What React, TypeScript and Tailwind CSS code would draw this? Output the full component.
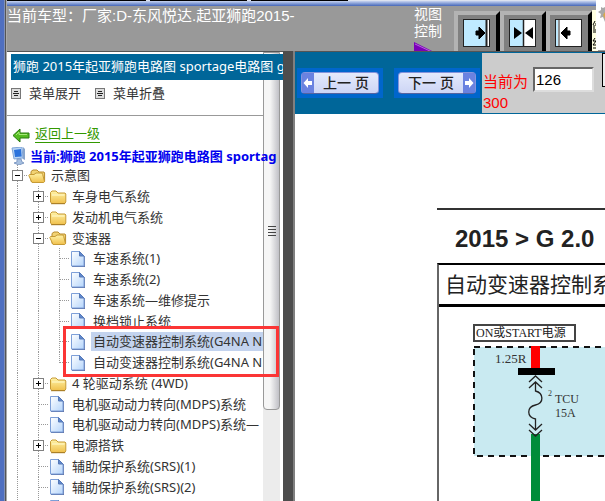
import type { ReactNode } from "react";

const UI = "font-['Noto_Sans','Noto_Sans_CJK_SC',sans-serif]";
const ARIAL = "font-['Liberation_Sans','Noto_Sans_CJK_SC',sans-serif]";
const SERIF = "font-['Liberation_Serif','Noto_Sans_CJK_SC',serif]";

type Cell = "line" | "tee" | "end" | "plus" | "minus" | "root";
type Row = { cells: Cell[]; icon: "open" | "closed" | "page"; text: string; selected?: boolean };

const rows: Row[] = [
  { cells: ["root"], icon: "open", text: "示意图" },
  { cells: ["line", "plus"], icon: "closed", text: "车身电气系统" },
  { cells: ["line", "plus"], icon: "closed", text: "发动机电气系统" },
  { cells: ["line", "minus"], icon: "open", text: "变速器" },
  { cells: ["line", "line", "tee"], icon: "page", text: "车速系统(1)" },
  { cells: ["line", "line", "tee"], icon: "page", text: "车速系统(2)" },
  { cells: ["line", "line", "tee"], icon: "page", text: "车速系统—维修提示" },
  { cells: ["line", "line", "tee"], icon: "page", text: "换档锁止系统" },
  { cells: ["line", "line", "tee"], icon: "page", text: "自动变速器控制系统(G4NA N", selected: true },
  { cells: ["line", "line", "end"], icon: "page", text: "自动变速器控制系统(G4NA N" },
  { cells: ["line", "plus"], icon: "closed", text: "4 轮驱动系统 (4WD)" },
  { cells: ["line", "tee"], icon: "page", text: "电机驱动动力转向(MDPS)系统" },
  { cells: ["line", "tee"], icon: "page", text: "电机驱动动力转向(MDPS)系统—" },
  { cells: ["line", "plus"], icon: "closed", text: "电源搭铁" },
  { cells: ["line", "tee"], icon: "page", text: "辅助保护系统(SRS)(1)" },
  { cells: ["line", "tee"], icon: "page", text: "辅助保护系统(SRS)(2)" },
  { cells: ["line", "tee"], icon: "page", text: "" },
];

function Guide({ kind }: { kind: Cell }) {
  const box = kind === "plus" || kind === "minus" || kind === "root";
  const drawing = (
    <svg width="21" height="21" viewBox="0 0 21 21" className="block" aria-hidden="true">
      <path
        d={kind === "end" ? "M10.5 0V11" : "M10.5 0V21"}
        stroke="#999"
        strokeDasharray="1 1"
        fill="none"
      />
      {kind !== "line" && <path d="M11 10.5H21" stroke="#999" strokeDasharray="1 1" fill="none" />}
      {box && <rect x="5.5" y="5.5" width="10" height="10" fill="#fff" stroke="#808080" />}
      {box && <path d="M8 10.5h5" stroke="#000" />}
      {kind === "plus" && <path d="M10.5 8v5" stroke="#000" />}
    </svg>
  );
  return box ? (
    <button type="button" aria-label="展开或折叠" className="shrink-0">
      {drawing}
    </button>
  ) : (
    <span className="shrink-0">{drawing}</span>
  );
}

function TreeIcon({ icon }: { icon: Row["icon"] }) {
  return (
    <svg width="18" height="18" viewBox="0 0 18 18" className="shrink-0" aria-hidden="true">
      <defs>
        <linearGradient id="fold" x1="0" y1="0" x2="0" y2="1">
          <stop offset="0" stopColor="#fff3a8" />
          <stop offset="1" stopColor="#f0c04c" />
        </linearGradient>
        <linearGradient id="page" x1="0" y1="0" x2="1" y2="1">
          <stop offset="0" stopColor="#ffffff" />
          <stop offset="1" stopColor="#b5d5fb" />
        </linearGradient>
      </defs>
      {icon === "closed" && (
        <>
          <path d="M1.5 14V4.5L3 3h4l2 2h7l.8 1V14l-1 1.5H3z" fill="url(#fold)" stroke="#c69a35" />
          <path d="M2 15.7h14" stroke="#a67a24" />
          <path d="M3 7h12.500" stroke="#fffbd0" />
        </>
      )}
      {icon === "open" && (
        <>
          <path d="M3 14.500V4.500L5 3h4l2 2h5l.6 1v8.500z" fill="#f2d374" stroke="#b88c2c" />
          <path d="M.8 8.500l.7-1H6l2-1.500h6l.7 1.500 1.800 7-.8 1H4z" fill="url(#fold)" stroke="#c69a35" />
        </>
      )}
      {icon === "page" && (
        <>
          <path d="M2 16.300h12.300V6" stroke="#5468a0" strokeWidth="1.200" fill="none" />
          <path d="M1.500 1.500h8l4.500 4.500v10H1.500z" fill="url(#page)" stroke="#7d9fd8" />
          <path d="M9.500 1.500v4.500h4.500z" fill="#6088cc" stroke="#5478b8" />
        </>
      )}
    </svg>
  );
}

function ListIcon() {
  return (
    <svg width="10" height="11" viewBox="0 0 10 11" aria-hidden="true">
      <rect x=".5" y=".5" width="9" height="10" fill="#ddd" stroke="#777" />
      <path d="M3 3.500h4M2 5.500h6M3 7.500h4" stroke="#222" />
    </svg>
  );
}

function ViewButton({ label, children }: { label: string; children: ReactNode }) {
  return (
    <button type="button" aria-label={label} className="shrink-0">
      <svg width="46" height="40" viewBox="0 0 46 40" className="block">
        <path d="M0 0h46v40H0z" fill="#b3b3b3" />
        <path d="M4 4h38v36H4z" fill="#808080" />
        <path d="M42 4l4-4v40h-4z" fill="#000" />
        <rect x="9.500" y="8.500" width="26" height="27" fill="#fff" stroke="#222" />
        {children}
      </svg>
    </button>
  );
}

function PageButton({ next, children }: { next?: boolean; children: ReactNode }) {
  const arrow = (
    <span className="flex w-3 shrink-0 items-center justify-center bg-[#6a82e0]">
      <svg width="10" height="12" viewBox="0 0 10 12" aria-hidden="true">
        <path d={next ? "M9.500 6L5 1v3H1v4h4v3z" : "M.5 6L5 1v3h4v4H5v3z"} fill="#fff" />
      </svg>
    </span>
  );
  return (
    <button type="button" className="flex w-[86px] shrink-0 bg-[#0066cc] p-1">
      <span className="flex h-[22px] flex-1 rounded-sm border border-[#8494dc] border-b-[#5563a0] bg-linear-to-b from-[#e4eafc] to-[#cdd5f5]">
        {!next && arrow}
        <span className="flex-1 whitespace-nowrap text-center text-[14px] leading-5 font-medium text-[#222]">
          {children}
        </span>
        {next && arrow}
      </span>
    </button>
  );
}

function Sidebar() {
  return (
    <aside className={`flex w-[276px] shrink-0 overflow-hidden border-t border-[#555] bg-white text-[13px] text-[#333] ${UI}`}>
      <div className="relative z-10 w-64 shrink-0">
        <h1 className="mt-[2px] ml-1 h-[26px] w-[272px] overflow-hidden whitespace-nowrap bg-[#006699] pl-[2px] leading-6 text-white">
          狮跑 2015年起亚狮跑电路图 sportage电路图 g
        </h1>
        <div className="flex h-9 items-center gap-[14px] border-b border-[#999] pb-2 pl-1">
          <button type="button" className="flex items-center gap-2">
            <ListIcon />
            菜单展开
          </button>
          <button type="button" className="flex items-center gap-2">
            <ListIcon />
            菜单折叠
          </button>
        </div>
        <div className="flex h-[27px] items-end gap-1 pl-[5px]">
          <svg width="19" height="15" viewBox="0 0 19 15" aria-hidden="true">
            <path d="M1 7.500L8 1v4h9v5H8v4z" fill="#55bb22" stroke="#287a10" />
            <path d="M4 7l3-3v2.500h8" stroke="#a5e878" fill="none" />
          </svg>
          <a href="#back" className="border-b border-[#339900] leading-[17px] text-[#339900]">
            返回上一级
          </a>
        </div>
        <div className="flex h-[22px] w-[276px] items-center gap-1 overflow-hidden whitespace-nowrap pt-1 pl-1 leading-[18px] font-bold text-[#0000ee]">
          <svg width="15" height="18" viewBox="0 0 15 18" className="shrink-0" aria-hidden="true">
            <path d="M1 1l10-1 1 11-9 1z" fill="#b7d4f4" stroke="#7fa4d8" />
            <path d="M3 3l7-1 .7 7.500L4 10z" fill="#2a72dc" />
            <path d="M12 0l2 2v11l-2-1z" fill="#88a5cc" />
            <path d="M6 12h4l1 3 2 1-5 2-5-2 3-1z" fill="#a6bfdf" stroke="#819cc5" />
          </svg>
          当前:狮跑 2015年起亚狮跑电路图 sportag
        </div>
        <div className="relative">
          <ul>
            {rows.map((row, i) => (
              <li key={i} className="flex h-[21px] items-center overflow-hidden nth-[4n]:h-5">
                {row.cells.map((cell, j) => (
                  <Guide key={j} kind={cell} />
                ))}
                <TreeIcon icon={row.icon} />
                {row.text && (
                  <a
                    href="#item"
                    className={`ml-[3px] flex-1 overflow-hidden whitespace-nowrap pl-[2px] leading-[19px] ${row.selected ? "bg-[#c3d3ee]" : ""}`}
                  >
                    {row.text}
                  </a>
                )}
              </li>
            ))}
          </ul>
          <div className="pointer-events-none absolute top-[161px] left-14 h-[51px] w-[216px] border-3 border-[#fb3535]" />
        </div>
      </div>
      <div className="w-[17px] shrink-0 bg-[#ececec]">
        <div className="flex h-[358px] items-center justify-center rounded-b-sm border border-[#999] bg-linear-to-r from-[#f6f6f6] from-40% to-[#c0c0c6]">
          <svg width="8" height="10" viewBox="0 0 8 10" aria-hidden="true">
            <path d="M0 .5h8M0 3.500h8M0 6.500h8M0 9.500h8" stroke="#444" />
          </svg>
        </div>
      </div>
    </aside>
  );
}

function Header() {
  return (
    <header className={`flex h-[45px] shrink-0 items-start overflow-hidden bg-[#999] text-white ${ARIAL}`}>
      <p className="w-[407px] shrink-0 whitespace-nowrap text-[15px] leading-[19px]">
        当前车型：厂家:D-东风悦达.起亚狮跑2015-
      </p>
      <div className="w-10 shrink-0">
        <p className="w-8 pb-[2px] text-[14px] leading-[17px]">视图控制</p>
        <svg width="22" height="11" viewBox="0 0 22 11" className="block" aria-hidden="true">
          <path d="M0 0l22 11H0z" fill="#7a00b8" />
          <path d="M1 2l17 8" stroke="#b760e0" />
        </svg>
      </div>
      <div className="flex min-w-0 flex-1 pt-1">
        <ViewButton label="展开左侧">
          <path d="M10 9h22v26H10z" fill="#bfeaff" />
          <path d="M32.500 9v26" stroke="#222" strokeWidth="2" />
          <path d="M22 20h3v-4l6 6-6 6v-4h-3z" fill="#000" stroke="#000" />
        </ViewButton>
        <ViewButton label="平分">
          <path d="M10 9h13v26H10z" fill="#bfeaff" />
          <path d="M23.500 9v26" stroke="#222" strokeWidth="1.500" />
          <path d="M14 16l8 6-8 6zM33 16l-8 6 8 6z" fill="#000" />
        </ViewButton>
        <ViewButton label="展开右侧">
          <path d="M10 9h2v26h-2z" fill="#bfeaff" />
          <path d="M13 9v26" stroke="#222" />
          <path d="M24 20h-3v-4l-6 6 6 6v-4h3z" fill="#000" stroke="#000" />
        </ViewButton>
        <svg width="6" height="41" viewBox="0 0 6 41" className="shrink-0" aria-hidden="true">
          <path d="M0 0h6v41H0z" fill="#ffffe1" />
          <path d="M3 11l-2 4M2 15v8M4 13v3M4 19v4M3 28l-2 3h3l-3 4h3M1 38h4" stroke="#000" fill="none" />
        </svg>
      </div>
    </header>
  );
}

function Diagram() {
  return (
    <section className="min-h-0 flex-1 overflow-hidden bg-white pt-[94px] pl-[142px] text-[#222]">
      <h2 className={`h-[55px] overflow-hidden whitespace-nowrap border-t-2 border-[#333] pl-[18px] text-2xl leading-[58px] font-bold ${ARIAL}`}>
        2015 &gt; G 2.0
      </h2>
      <div className="border-t-2 border-l-2 border-t-black border-l-[#666]">
        <h3 className={`h-[42px] overflow-hidden whitespace-nowrap border-b-3 border-black pl-[6px] text-[21px] leading-[39px] ${ARIAL}`}>
          自动变速器控制系统
        </h3>
        <div className="pt-[17px] pl-[34px]">
          <p className={`h-[18px] w-[103px] whitespace-nowrap border-2 border-[#444] pl-px text-[12px] leading-[14px] ${SERIF}`}>
            ON或START电源
          </p>
          <svg width="400" height="180" viewBox="0 0 400 180" className="mt-1 block max-w-none">
            <rect x="1" y="1" width="390" height="109" fill="#c9eaf1" stroke="#111" strokeWidth="2" strokeDasharray="6 5" />
            <path d="M58 0h9v22h-9z" fill="#f00" />
            <path d="M45 22h37v7H45z" fill="#000" />
            <path d="M58 88h9v92h-9z" fill="#008c3a" />
            <path
              d="M56 36l6.500-6 6.500 6M56 42l6.500-6 6.500 6M62.500 37v8c8 2 9 12 0 14-9 2-9 12 0 14v11M56 78l6.500 6 6.500-6M56 84l6.500 6 6.500-6"
              stroke="#222"
              strokeWidth="1.300"
              fill="none"
            />
            <g fill="#333" className={SERIF}>
              <text x="22" y="17" fontSize="13">1.25R</text>
              <text x="75" y="50" fontSize="8">2</text>
              <text x="82" y="57" fontSize="12">TCU</text>
              <text x="82" y="71" fontSize="12">15A</text>
            </g>
          </svg>
        </div>
      </div>
    </section>
  );
}

export default function App() {
  return (
    <div className="relative flex h-screen overflow-hidden bg-white">
      <div className="w-[5px] shrink-0 border-r border-[#8090b8] bg-[#4f6fc0]" />
      <div className="w-[2px] shrink-0 border-l border-[#555] bg-[#aaa]" />
      <div className="flex min-w-0 flex-1 flex-col">
        <div className="flex h-px shrink-0 gap-1 bg-[#dde3f0]">
          <div className="w-[139px] bg-black" />
          <div className="w-[97px] bg-black" />
          <div className="w-[97px] bg-black" />
        </div>
        <div className="h-[5px] shrink-0 bg-linear-to-b from-[#c8d4f0] to-[#4767b8]" />
        <Header />
        <div className="flex min-h-0 flex-1">
          <Sidebar />
          <div className="w-[10px] shrink-0 bg-[#4d4d4d]" />
          <main className="flex min-w-0 flex-1 flex-col border-l-2 border-[#808080]">
            <nav className={`flex h-[63px] shrink-0 overflow-hidden border-t border-[#555] bg-[#006699] text-[15px] ${ARIAL}`}>
              <div className="flex w-[187px] shrink-0 items-center gap-[11px] pl-[2px]">
                <PageButton>上一 页</PageButton>
                <PageButton next>下一 页</PageButton>
              </div>
              <div className="my-px flex flex-1 items-start bg-[#ccc] pl-px">
                <label htmlFor="page" className="w-[50px] shrink-0 pt-[18px] leading-[21px] text-[#f00]">
                  当前为 300
                </label>
                <input
                  id="page"
                  defaultValue="126"
                  className="mt-[14px] h-[25px] w-[61px] shrink-0 border-2 border-t-[#666] border-r-[#ddd] border-b-[#ddd] border-l-[#666] bg-white px-px text-black"
                />
                <button type="button" aria-label="跳转" className="ml-2 h-[34px] w-10 shrink-0 border border-black bg-[#eee]" />
              </div>
            </nav>
            <Diagram />
          </main>
        </div>
      </div>
      <div className="absolute top-0 right-0 h-[50px] w-[9px] bg-white">
        <svg width="9" height="26" viewBox="0 0 9 26" className="block" aria-hidden="true">
          <path d="M9 7l-2 1-2-1v3l-3 2 3 2-1 4 3-1 2 5z" fill="#a8a8a8" />
          <path d="M9 12l-2 3 2 4z" fill="#d9a84a" />
        </svg>
      </div>
    </div>
  );
}
